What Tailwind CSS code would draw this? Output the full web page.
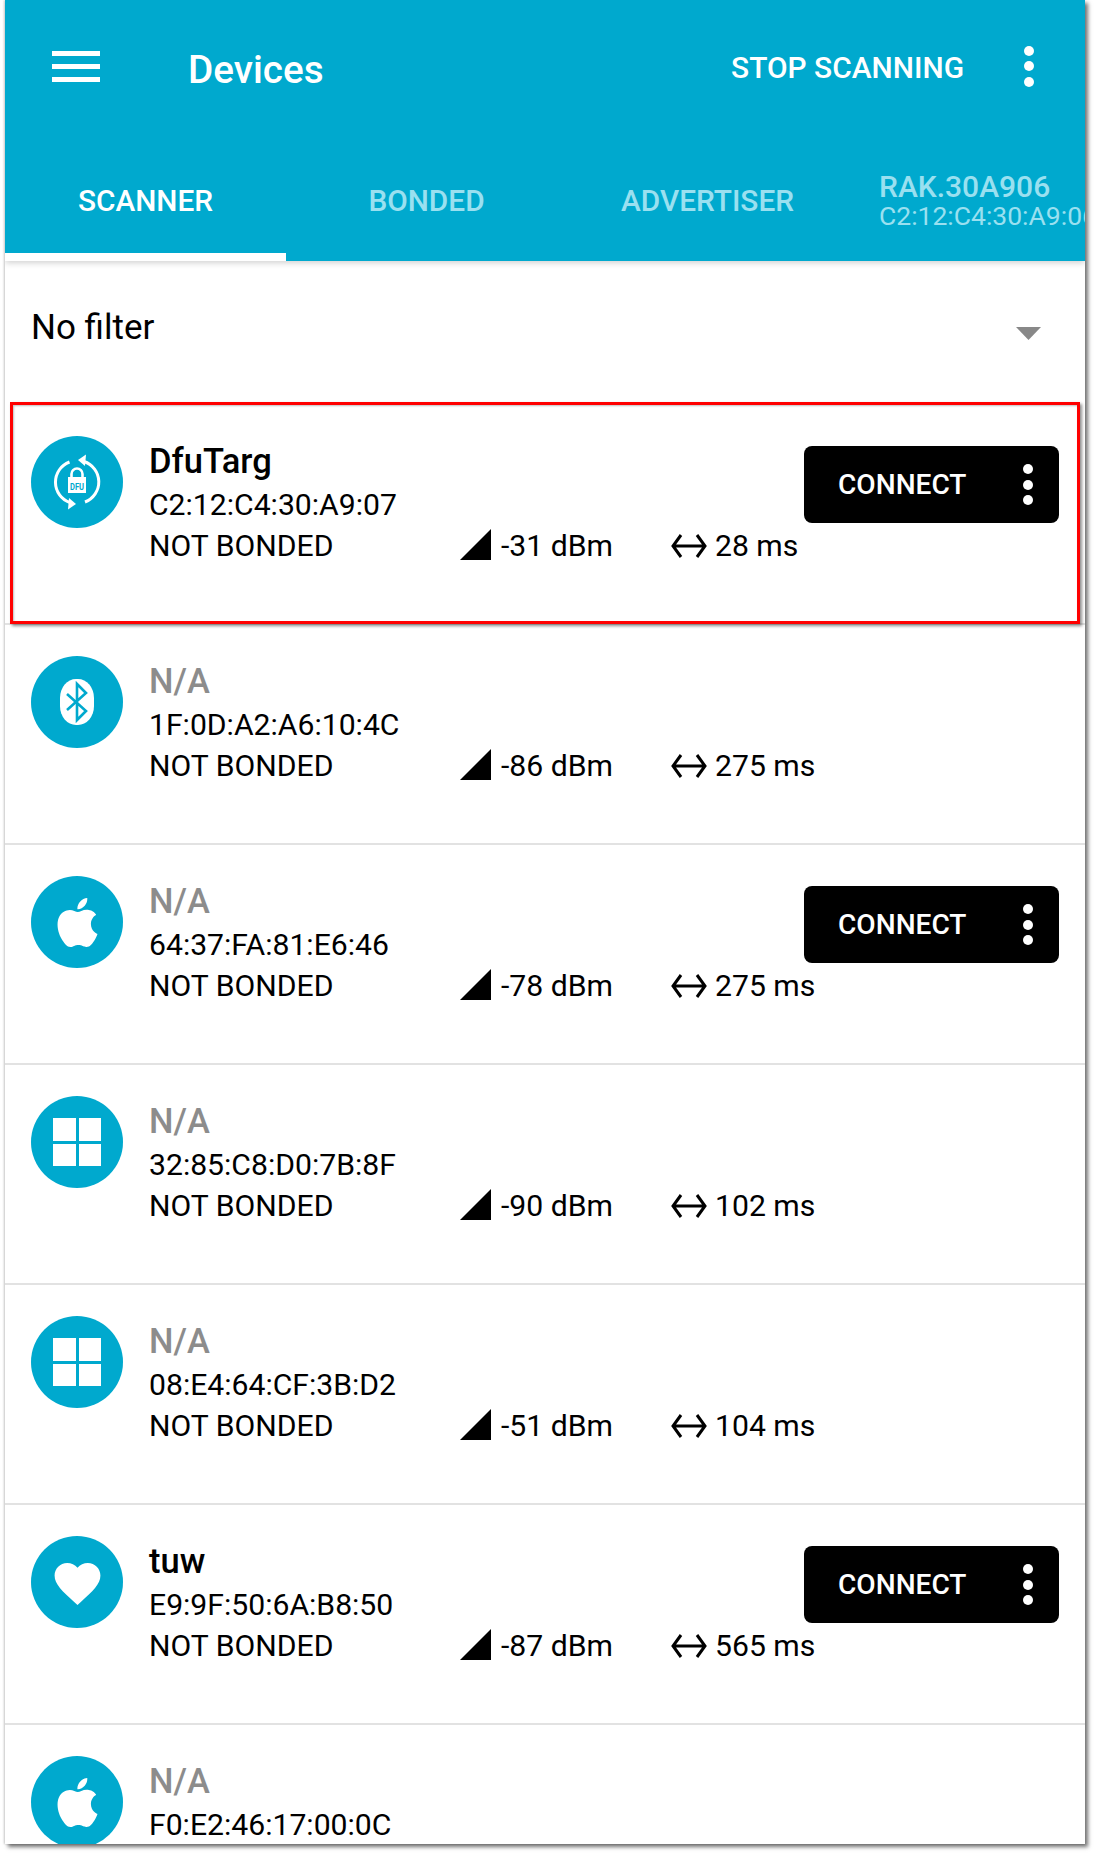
<!DOCTYPE html>
<html lang="en">
<head>
  <meta charset="UTF-8" />
  <title>Devices</title>
  <script src="https://cdn.jsdelivr.net/npm/@tailwindcss/browser@4"></script>
</head>
<body class="bg-white h-[1853px] overflow-hidden font-['Roboto',sans-serif] text-black">

  <div class="relative ml-[5px] w-[1080px] h-[1844px] bg-white shadow-[3px_3px_4px_rgba(0,0,0,0.55),-1px_0_2px_rgba(0,0,0,0.2)]">
    <div class="h-full overflow-hidden">

      <header class="relative z-10 h-[261px] bg-[#00a9ce] text-white shadow-[0_2px_6px_rgba(0,0,0,0.18)]">
        <div class="h-[132px] flex items-center">
          <div class="ml-[47px] w-[48px] flex flex-col gap-[8px]">
            <div class="h-[5px] bg-white"></div>
            <div class="h-[5px] bg-white"></div>
            <div class="h-[5px] bg-white"></div>
          </div>
          <h1 class="ml-[88px] text-[38.7px] font-medium leading-none mt-[8px]">Devices</h1>
          <span class="ml-auto text-[29.9px] font-medium leading-none mt-[3px]">STOP SCANNING</span>
          <div class="ml-[60px] mr-[51px] flex flex-col gap-[5.5px]">
            <div class="size-[10px] rounded-full bg-white"></div>
            <div class="size-[10px] rounded-full bg-white"></div>
            <div class="size-[10px] rounded-full bg-white"></div>
          </div>
        </div>
        <nav class="mt-[9px] h-[120px] flex overflow-hidden text-[29.8px] font-medium text-[#9ae0f0]">
          <div class="w-[281px] shrink-0 flex items-center justify-center text-white border-b-[8px] border-white pt-[8px]">SCANNER</div>
          <div class="w-[281px] shrink-0 flex items-center justify-center">BONDED</div>
          <div class="w-[281px] shrink-0 flex items-center justify-center">ADVERTISER</div>
          <div class="w-[237px] shrink-0 pl-[31px] pt-[30px] whitespace-nowrap overflow-hidden">
            <div class="leading-[31px] text-[30px]">RAK.30A906</div>
            <div class="leading-[28px] text-[26.5px] font-normal">C2:12:C4:30:A9:06</div>
          </div>
        </nav>
      </header>

      <div class="h-[144px] flex items-center justify-between pl-[26px] pr-[44px]">
        <span class="text-[35px] leading-none mt-[-12px]">No filter</span>
        <svg class="mt-[0px]" width="25" height="13" viewBox="0 0 25 13"><polygon points="0,0 25,0 12.5,13" fill="#888888"/></svg>
      </div>

      <main id="device-list"></main>
    </div>

    <!-- red highlight over the first row -->
    <div class="absolute left-[5px] top-[402px] w-[1070px] h-[222px] border-[3px] border-[#ff0000] shadow-[2px_2px_3px_rgba(0,0,0,0.45),inset_1px_1px_2px_rgba(0,0,0,0.25)]"></div>
  </div>

  <script>
    const appleIcon = `<svg width="49" height="49" viewBox="0 0 24 24" fill="#fff"><path d="M12.152 6.896c-.948 0-2.415-1.078-3.96-1.04-2.04.027-3.91 1.183-4.961 3.014-2.117 3.675-.546 9.103 1.519 12.09 1.013 1.454 2.208 3.09 3.792 3.039 1.52-.065 2.09-.987 3.935-.987 1.831 0 2.35.987 3.96.948 1.637-.026 2.676-1.48 3.676-2.948 1.156-1.688 1.636-3.325 1.662-3.415-.039-.013-3.182-1.221-3.22-4.857-.026-3.04 2.48-4.494 2.597-4.559-1.429-2.09-3.623-2.324-4.39-2.376-2-.156-3.675 1.09-4.61 1.09zM15.53 3.83c.843-1.012 1.4-2.427 1.245-3.83-1.207.052-2.662.805-3.532 1.818-.78.896-1.454 2.338-1.273 3.714 1.338.104 2.715-.688 3.559-1.701"/></svg>`;

    const windowsIcon = `<div class="w-[48px] grid grid-cols-2 gap-[3px]">
      <div class="h-[22.5px] bg-white"></div><div class="h-[22.5px] bg-white"></div>
      <div class="h-[22.5px] bg-white"></div><div class="h-[22.5px] bg-white"></div>
    </div>`;

    const heartIcon = `<svg class="mt-[2px]" width="55" height="55" viewBox="0 0 24 24" fill="#fff"><path d="M12 21.35l-1.45-1.32C5.4 15.36 2 12.28 2 8.5 2 5.42 4.42 3 7.5 3c1.74 0 3.41.81 4.5 2.09C13.09 3.81 14.76 3 16.5 3 19.58 3 22 5.42 22 8.5c0 3.78-3.4 6.86-8.55 11.54L12 21.35z"/></svg>`;

    const bluetoothIcon = `<svg width="34" height="46" viewBox="0 0 34 46"><rect width="34" height="46" rx="16" ry="19" fill="#fff"/><path d="M7 15 L26 32 L17 41 L17 5 L26 14 L7 31" fill="none" stroke="#00a9ce" stroke-width="2.6"/></svg>`;

    const dfuIcon = `<svg width="92" height="92" viewBox="-46 -46 92 92" fill="#fff">
      <path d="M8 20 A21.5 21.5 0 0 0 7 -20.5" fill="none" stroke="#fff" stroke-width="3"/>
      <polygon points="1,-22 9,-27.5 8,-16"/>
      <path d="M-7.5 -20 A21.5 21.5 0 0 0 -7 20.5" fill="none" stroke="#fff" stroke-width="3"/>
      <polygon points="-1,22 -9,27.5 -8,16"/>
      <path d="M-5.5 -5 V-8 A5.5 5.5 0 0 1 5.5 -8 V-5" fill="none" stroke="#fff" stroke-width="2.6"/>
      <rect x="-9" y="-5" width="18" height="16"/>
      <text x="0" y="7.5" text-anchor="middle" font-size="8.5" font-weight="700" fill="#00a9ce" font-family="Roboto, sans-serif" textLength="14" lengthAdjust="spacingAndGlyphs">DFU</text>
    </svg>`;

    const devices = [
      { icon: dfuIcon, name: 'DfuTarg', addr: 'C2:12:C4:30:A9:07', rssi: '-31 dBm', interval: '28 ms', connect: true },
      { icon: bluetoothIcon, name: 'N/A', addr: '1F:0D:A2:A6:10:4C', rssi: '-86 dBm', interval: '275 ms' },
      { icon: appleIcon, name: 'N/A', addr: '64:37:FA:81:E6:46', rssi: '-78 dBm', interval: '275 ms', connect: true },
      { icon: windowsIcon, name: 'N/A', addr: '32:85:C8:D0:7B:8F', rssi: '-90 dBm', interval: '102 ms' },
      { icon: windowsIcon, name: 'N/A', addr: '08:E4:64:CF:3B:D2', rssi: '-51 dBm', interval: '104 ms' },
      { icon: heartIcon, name: 'tuw', addr: 'E9:9F:50:6A:B8:50', rssi: '-87 dBm', interval: '565 ms', connect: true },
      { icon: appleIcon, name: 'N/A', addr: 'F0:E2:46:17:00:0C', rssi: '', interval: '' },
    ];

    const connectButton = `<div class="mt-[41px] w-[255px] h-[77px] shrink-0 rounded-[8px] bg-black text-white flex items-center pl-[34px]">
      <span class="text-[28.1px] font-medium leading-none mt-[2px]">CONNECT</span>
      <div class="ml-auto mr-[26px] flex flex-col gap-[5.5px]">
        <div class="size-[10px] rounded-full bg-white"></div>
        <div class="size-[10px] rounded-full bg-white"></div>
        <div class="size-[10px] rounded-full bg-white"></div>
      </div>
    </div>`;

    document.getElementById('device-list').innerHTML = devices.map(d => `
      <div class="h-[220px] flex pl-[26px] border-b-[2px] border-[#e2e2e2]">
        <div class="mt-[31px] size-[92px] shrink-0 rounded-full bg-[#00a9ce] flex items-center justify-center">${d.icon}</div>
        <div class="ml-[26px] w-[655px] shrink-0 pt-[35px] text-[30.15px]">
          <div class="leading-[42px] text-[34.5px] font-medium ${d.name === 'N/A' ? 'text-[#8c8c8c]' : ''}">${d.name}</div>
          <div class="mt-[3px] leading-[40px] whitespace-nowrap">${d.addr}</div>
          <div class="h-[41px] leading-[41px] flex items-center whitespace-nowrap">
            <span class="w-[311px] shrink-0">NOT BONDED</span>
            <svg class="mt-[-2px] shrink-0" width="31" height="31" viewBox="0 0 31 31"><polygon points="31,0 31,31 0,31" fill="#000"/></svg>
            <span class="ml-[10px] w-[170px] shrink-0">${d.rssi}</span>
            <svg class="shrink-0" width="36" height="26" viewBox="0 0 36 26" fill="none" stroke="#000" stroke-width="3"><path d="M2 13 H34 M10 2 L2 13 L10 24 M26 2 L34 13 L26 24"/></svg>
            <span class="ml-[8px] shrink-0">${d.interval}</span>
          </div>
        </div>
        ${d.connect ? connectButton : ''}
      </div>`).join('');
  </script>
</body>
</html>
